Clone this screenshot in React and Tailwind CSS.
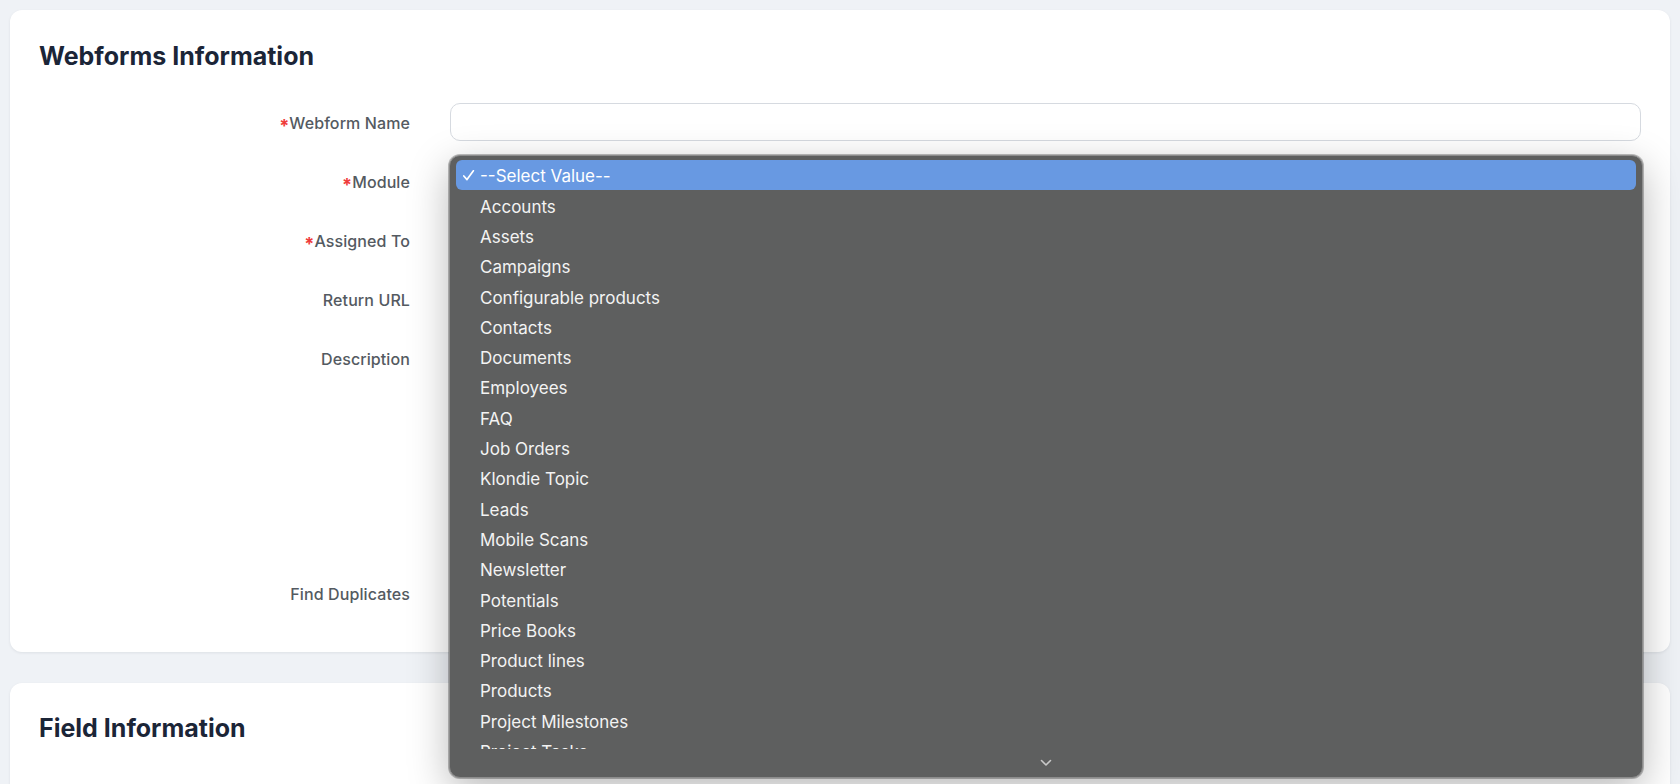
import React from "react";

const modules = [
  "Accounts",
  "Assets",
  "Campaigns",
  "Configurable products",
  "Contacts",
  "Documents",
  "Employees",
  "FAQ",
  "Job Orders",
  "Klondie Topic",
  "Leads",
  "Mobile Scans",
  "Newsletter",
  "Potentials",
  "Price Books",
  "Product lines",
  "Products",
  "Project Milestones",
  "Project Tasks",
  "Projects",
];

function Label({ children, required }) {
  return (
    <div className="flex justify-end items-center text-[16px] leading-6 font-medium text-[#545a61] tracking-[0.1px] pt-[2px]">
      {required && (
        <span className="text-[#ef3b3b] text-[18px] leading-none font-bold translate-y-[3px]">*</span>
      )}
      <span>{children}</span>
    </div>
  );
}

function Row({ label, required, children, tall, top }) {
  return (
    <div
      className={
        "grid grid-cols-[371px_1fr] gap-x-10 " +
        (tall ? "h-[214px] items-start" : "h-[38px] items-center")
      }
    >
      <div className={top ? "pt-[6px]" : ""}>
        <Label required={required}>{label}</Label>
      </div>
      <div className="relative h-full">{children}</div>
    </div>
  );
}

function ModulePopup() {
  return (
    <div className="absolute z-20 top-[-7px] left-[-1px] right-[-2px] h-[623px] rounded-[11px] border border-[#8c8c8c] bg-[#5e5f5f] shadow-[0_12px_40px_rgba(0,0,0,0.28),0_0_0_1px_rgba(0,0,0,0.25)] overflow-hidden flex flex-col font-['Inter',sans-serif] text-[17px] text-[#f3f3f3]">
      <div className="flex-1 overflow-hidden px-[6px] pt-[4px]">
        <div className="relative h-[30.3px] flex items-center pl-[24px] pt-[3px] rounded-[6px] bg-[#6899e2] text-white">
          <svg className="absolute left-[6px] top-[9px]" width="13" height="13" viewBox="0 0 13 13" fill="none">
            <path d="M1.8 7 L5 10.6 L11.4 1.8" stroke="#ffffff" strokeWidth="1.7" strokeLinecap="round" strokeLinejoin="round" />
          </svg>
          --Select Value--
        </div>
        {modules.map((m) => (
          <div key={m} className="h-[30.3px] flex items-center pl-[24px] pt-[4px]">
            {m}
          </div>
        ))}
      </div>
      <div className="h-[28px] flex items-center justify-center">
        <svg width="12" height="8" viewBox="0 0 12 8" fill="none">
          <path d="M1.5 1.5 L6 6 L10.5 1.5" stroke="#c9c9c9" strokeWidth="1.6" strokeLinecap="round" strokeLinejoin="round" />
        </svg>
      </div>
    </div>
  );
}

export default function App() {
  return (
    <div className="h-[784px] overflow-hidden bg-[#eff2f6] px-[10px] pt-[10px] font-['Inter',sans-serif]">
      <section className="rounded-xl bg-white shadow-[0_1px_3px_rgba(15,23,42,0.08)] pl-[29px] pr-[29px] pt-[30px] pb-[40px]">
        <h2 className="text-[25px] leading-8 font-bold text-[#1b2537]">Webforms Information</h2>
        <div className="mt-[31px] flex flex-col gap-[21px]">
          <Row label="Webform Name" required>
            <input className="w-full h-[38px] rounded-[10px] border border-[#d6dae0] bg-white px-3 outline-none" />
          </Row>
          <Row label="Module" required>
            <div className="w-full h-[38px] rounded-[10px] border border-[#d6dae0] bg-white" />
            <ModulePopup />
          </Row>
          <Row label="Assigned To" required>
            <div className="w-full h-[38px] rounded-[10px] border border-[#d6dae0] bg-white" />
          </Row>
          <Row label="Return URL">
            <div className="w-full h-[38px] rounded-[10px] border border-[#d6dae0] bg-white" />
          </Row>
          <Row label="Description" tall top>
            <div className="w-full h-[180px] rounded-[10px] border border-[#d6dae0] bg-white" />
          </Row>
          <Row label="Find Duplicates">
            <div className="w-[18px] h-[18px] rounded border border-[#d6dae0] bg-white" />
          </Row>
        </div>
      </section>
      <section className="mt-[31px] h-[300px] rounded-xl bg-white shadow-[0_1px_3px_rgba(15,23,42,0.08)] pl-[29px] pt-[29px]">
        <h2 className="text-[25px] leading-8 font-bold text-[#1b2537]">Field Information</h2>
      </section>
    </div>
  );
}
